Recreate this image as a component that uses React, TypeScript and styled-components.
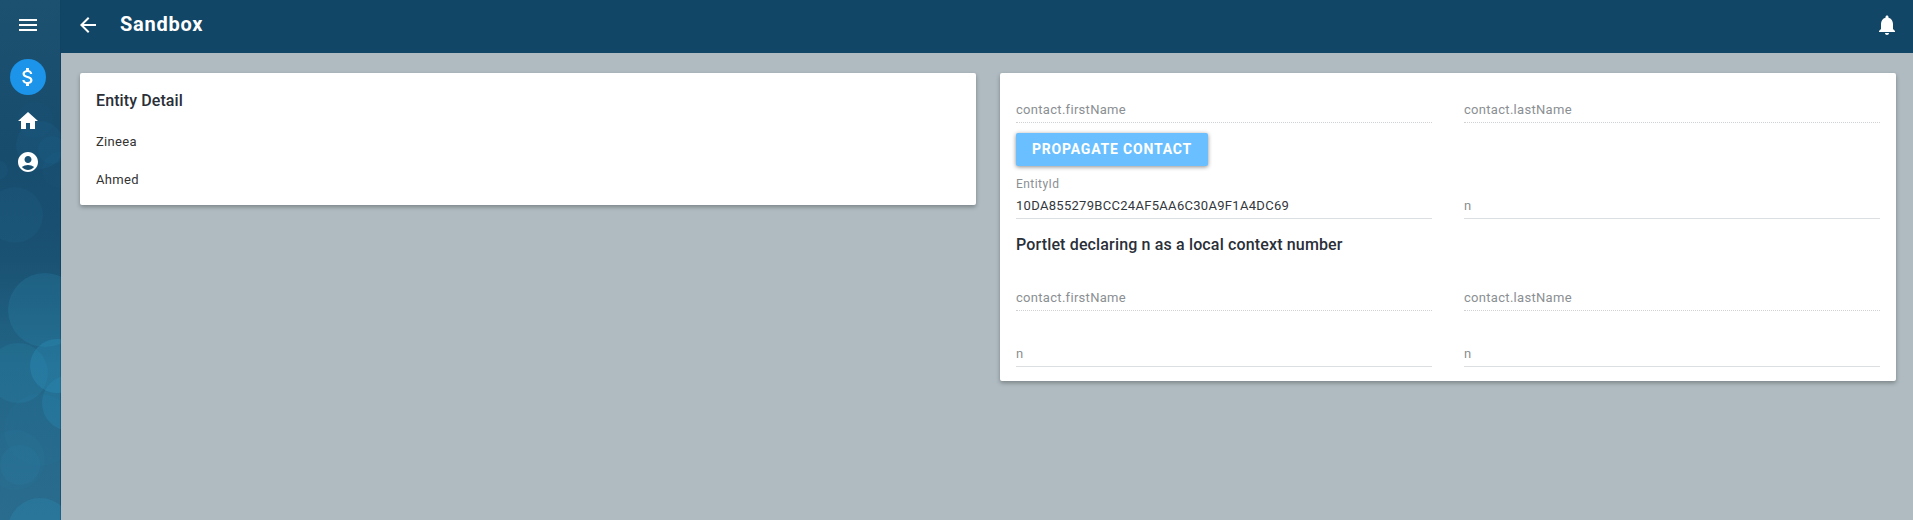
import React from "react";
import styled, { createGlobalStyle } from "styled-components";

const Global = createGlobalStyle`
  html, body { margin: 0; padding: 0; height: 100%; }
  body { font-family: Roboto, "Liberation Sans", sans-serif; background: #afbbc1; overflow: hidden; }
  * { box-sizing: border-box; }
`;

const Shell = styled.div`
  display: flex;
  width: 100%;
  height: 520px;
`;

const Sidebar = styled.aside`
  position: relative;
  width: 61px;
  flex: none;
  overflow: hidden;
  background: linear-gradient(180deg, #1c5170 0%, #174c6d 30%, #1a5273 50%, #226687 70%, #2a6c8d 100%);
  box-shadow: inset -1px 0 0 rgba(10, 50, 80, 0.45);
`;

const Bokeh = styled.svg`
  position: absolute;
  inset: 0;
  width: 61px;
  height: 520px;
`;

const SideIcons = styled.div`
  position: relative;
  display: flex;
  flex-direction: column;
  align-items: center;
  width: 56px;
`;

const MenuSlot = styled.div`
  height: 50px;
  display: flex;
  align-items: center;
  justify-content: center;
  margin-bottom: 9px;
`;

const ActiveIcon = styled.div`
  width: 36px;
  height: 36px;
  border-radius: 50%;
  background: #1b94ea;
  display: flex;
  align-items: center;
  justify-content: center;
  margin-bottom: 14px;
`;

const NavIcon = styled.div`
  height: 24px;
  width: 24px;
  margin-bottom: 17px;
`;

const Main = styled.div`
  flex: 1;
  min-width: 0;
  display: flex;
  flex-direction: column;
`;

const Header = styled.header`
  height: 53px;
  background: #124666;
  display: flex;
  align-items: center;
  padding: 0 14px 3px 15px;
  color: #fff;
`;

const Title = styled.h1`
  margin: 0 0 2px 20px;
  font-size: 20px;
  font-weight: 700;
  letter-spacing: 0.75px;
  flex: 1;
`;

const Content = styled.main`
  display: grid;
  grid-template-columns: 896px 896px;
  column-gap: 24px;
  align-items: start;
  padding: 20px 17px 0 19px;
`;

const Card = styled.section`
  background: #fff;
  border-radius: 2px;
  box-shadow: 0 2px 4px rgba(0, 0, 0, 0.3);
`;

const DetailCard = styled(Card)`
  height: 132px;
  padding: 18px 16px 0;
`;

const CardTitle = styled.h2`
  margin: 0;
  font-size: 16px;
  line-height: 19px;
  font-weight: 500;
  color: #2a2f38;
  letter-spacing: 0.1px;
`;

const Plain = styled.p`
  margin: 24px 0 0;
  font-size: 13px;
  line-height: 15px;
  color: #333;
  letter-spacing: 0.3px;
  & + & { margin-top: 23px; }
`;

const FormCard = styled(Card)`
  height: 308px;
  padding: 0 16px;
`;

const Row = styled.div<{ $top: number }>`
  display: grid;
  grid-template-columns: 416px 416px;
  column-gap: 32px;
  margin-top: ${(p) => p.$top}px;
`;

const Field = styled.div<{ $dotted?: boolean; $height?: number }>`
  height: ${(p) => p.$height ?? 20}px;
  border-bottom: 1px ${(p) => (p.$dotted ? "dotted #cfd2d5" : "solid #dcdfe2")};
  display: flex;
  flex-direction: column;
  justify-content: flex-end;
  padding-bottom: 5px;
`;

const Placeholder = styled.span`
  font-size: 13px;
  line-height: 15px;
  color: #8b8f93;
  letter-spacing: 0.3px;
`;

const Label = styled.span`
  font-size: 12px;
  line-height: 14px;
  color: #8b8f93;
  letter-spacing: 0.45px;
  margin-bottom: 7px;
`;

const Value = styled.span`
  font-size: 13px;
  line-height: 15px;
  color: #33373c;
  letter-spacing: 0.3px;
`;

const Button = styled.button`
  display: block;
  margin: 10px 0 0;
  width: 192px;
  height: 33px;
  padding: 0 0 2px;
  border: 0;
  border-radius: 2px;
  background: #69bfff;
  color: #fff;
  font: 700 14px Roboto, sans-serif;
  letter-spacing: 0.8px;
  text-transform: uppercase;
  box-shadow: 0 1px 4px rgba(0, 0, 0, 0.45);
`;

const SubTitle = styled.h3`
  margin: 16px 0 0;
  font-size: 16px;
  line-height: 19px;
  font-weight: 500;
  color: #2a2f38;
  letter-spacing: 0.15px;
`;

const Glyph = styled.svg`
  display: block;
  fill: #fff;
`;

export default function App() {
  return (
    <>
      <Global />
      <Shell>
        <Sidebar>
          <Bokeh viewBox="0 0 61 520">
            <g fill="#2f9fd0">
              <circle cx="40" cy="145" r="24" opacity=".07" />
              <circle cx="-2" cy="170" r="10" opacity=".06" />
              <circle cx="35" cy="120" r="18" opacity=".03" />
              <circle cx="52" cy="150" r="14" opacity=".06" />
              <circle cx="60" cy="170" r="18" opacity=".04" />
              <circle cx="15" cy="215" r="28" opacity=".06" />
              <circle cx="45" cy="310" r="37" opacity=".16" />
              <circle cx="18" cy="373" r="30" opacity=".13" />
              <circle cx="57" cy="366" r="27" opacity=".25" />
              <circle cx="70" cy="403" r="28" opacity=".18" />
              <circle cx="40" cy="430" r="36" opacity=".05" />
              <circle cx="20" cy="465" r="20" opacity=".08" />
              <circle cx="15" cy="460" r="30" opacity=".06" />
              <circle cx="40" cy="530" r="32" opacity=".2" />
            </g>
          </Bokeh>
          <SideIcons>
            <MenuSlot>
              <Glyph width="24" height="24" viewBox="0 0 24 24">
                <path d="M3 18h18v-2H3v2zm0-5h18v-2H3v2zm0-7v2h18V6H3z" />
              </Glyph>
            </MenuSlot>
            <ActiveIcon>
              <Glyph width="24" height="24" viewBox="0 0 24 24">
                <path d="M11.8 10.9c-2.27-.59-3-1.2-3-2.15 0-1.09 1.01-1.85 2.7-1.85 1.78 0 2.44.85 2.5 2.1h2.21c-.07-1.72-1.12-3.3-3.21-3.81V3h-3v2.16c-1.94.42-3.5 1.68-3.5 3.61 0 2.31 1.91 3.46 4.7 4.13 2.5.6 3 1.48 3 2.41 0 .69-.49 1.79-2.7 1.79-2.06 0-2.87-.92-2.98-2.1h-2.2c.12 2.19 1.76 3.42 3.68 3.83V21h3v-2.15c1.95-.37 3.5-1.5 3.5-3.55 0-2.84-2.43-3.81-4.7-4.4z" />
              </Glyph>
            </ActiveIcon>
            <NavIcon>
              <Glyph width="24" height="24" viewBox="0 0 24 24">
                <path d="M10 20v-6h4v6h5v-8h3L12 3 2 12h3v8z" />
              </Glyph>
            </NavIcon>
            <NavIcon>
              <Glyph width="24" height="24" viewBox="0 0 24 24">
                <path d="M12 2C6.48 2 2 6.48 2 12s4.48 10 10 10 10-4.48 10-10S17.52 2 12 2zm0 4c1.93 0 3.5 1.57 3.5 3.5S13.93 13 12 13s-3.5-1.57-3.5-3.5S10.07 6 12 6zm0 14c-2.03 0-4.43-.82-6.14-2.88C7.55 15.8 9.68 15 12 15s4.45.8 6.14 2.12C16.43 19.18 14.03 20 12 20z" />
              </Glyph>
            </NavIcon>
          </SideIcons>
        </Sidebar>
        <Main>
          <Header>
            <Glyph width="24" height="24" viewBox="0 0 24 24">
              <path d="M20 11H7.83l5.59-5.59L12 4l-8 8 8 8 1.41-1.41L7.83 13H20v-2z" />
            </Glyph>
            <Title>Sandbox</Title>
            <Glyph width="24" height="24" viewBox="0 0 24 24">
              <path d="M12 22c1.1 0 2-.9 2-2h-4c0 1.1.9 2 2 2zm6-6v-5c0-3.07-1.63-5.64-4.5-6.32V4c0-.83-.67-1.5-1.5-1.5s-1.5.67-1.5 1.5v.68C7.64 5.36 6 7.92 6 11v5l-2 2v1h16v-1l-2-2z" />
            </Glyph>
          </Header>
          <Content>
            <DetailCard>
              <CardTitle>Entity Detail</CardTitle>
              <Plain>Zineea</Plain>
              <Plain>Ahmed</Plain>
            </DetailCard>
            <FormCard>
              <Row $top={0}>
                <Field $dotted $height={50}>
                  <Placeholder>contact.firstName</Placeholder>
                </Field>
                <Field $dotted $height={50}>
                  <Placeholder>contact.lastName</Placeholder>
                </Field>
              </Row>
              <Button>Propagate Contact</Button>
              <Row $top={0}>
                <Field $height={53}>
                  <Label>EntityId</Label>
                  <Value>10DA855279BCC24AF5AA6C30A9F1A4DC69</Value>
                </Field>
                <Field $height={53}>
                  <Placeholder>n</Placeholder>
                </Field>
              </Row>
              <SubTitle>Portlet declaring n as a local context number</SubTitle>
              <Row $top={35}>
                <Field $dotted $height={22}>
                  <Placeholder>contact.firstName</Placeholder>
                </Field>
                <Field $dotted $height={22}>
                  <Placeholder>contact.lastName</Placeholder>
                </Field>
              </Row>
              <Row $top={33}>
                <Field $height={23}>
                  <Placeholder>n</Placeholder>
                </Field>
                <Field $height={23}>
                  <Placeholder>n</Placeholder>
                </Field>
              </Row>
            </FormCard>
          </Content>
        </Main>
      </Shell>
    </>
  );
}
